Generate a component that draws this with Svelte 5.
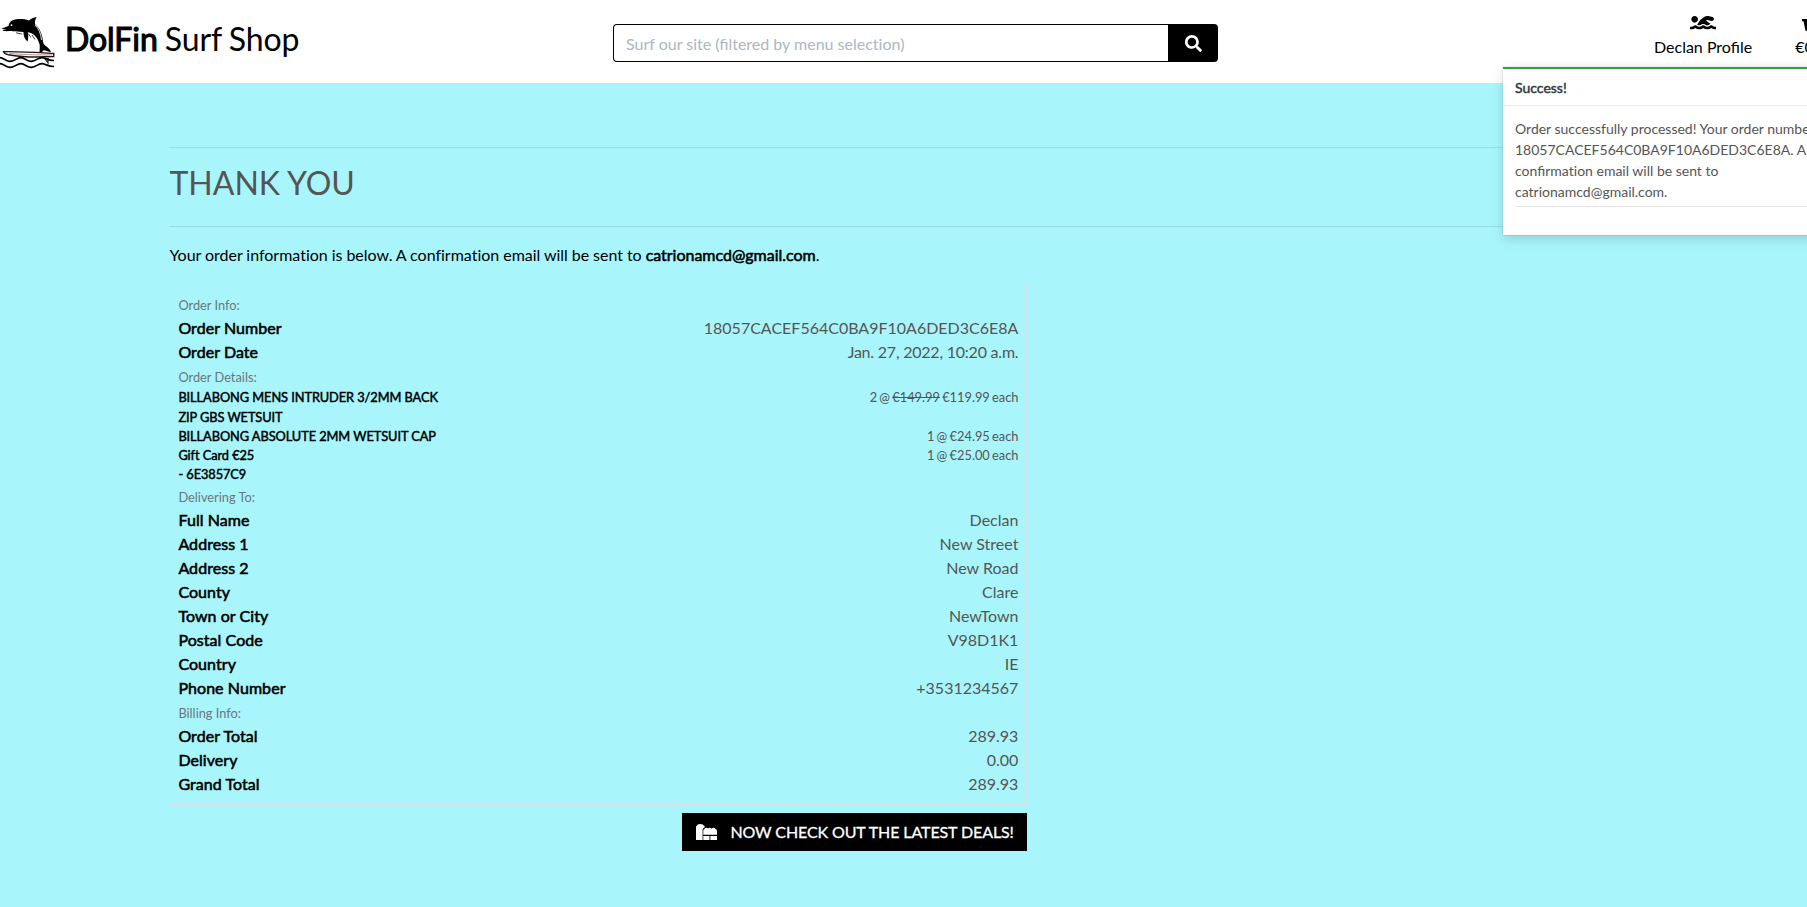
<script>
  const info = [
    ['Order Number', '18057CACEF564C0BA9F10A6DED3C6E8A'],
    ['Order Date', 'Jan. 27, 2022, 10:20 a.m.']
  ];
  const items = [
    { name: 'BILLABONG MENS INTRUDER 3/2MM BACK ZIP GBS WETSUIT', qty: 2, was: '€149.99', price: '€119.99' },
    { name: 'BILLABONG ABSOLUTE 2MM WETSUIT CAP', qty: 1, price: '€24.95' },
    { name: 'Gift Card €25', code: '- 6E3857C9', qty: 1, price: '€25.00' }
  ];
  const delivery = [
    ['Full Name', 'Declan'],
    ['Address 1', 'New Street'],
    ['Address 2', 'New Road'],
    ['County', 'Clare'],
    ['Town or City', 'NewTown'],
    ['Postal Code', 'V98D1K1'],
    ['Country', 'IE'],
    ['Phone Number', '+3531234567']
  ];
  const billing = [
    ['Order Total', '289.93'],
    ['Delivery', '0.00'],
    ['Grand Total', '289.93']
  ];
</script>

{#snippet rows(list)}
  {#each list as [label, value]}
    <div class="row"><span class="strong label">{label}</span><span class="value" class:date={label === 'Order Date'}>{value}</span></div>
  {/each}
{/snippet}

<div class="page">
  <header>
    <div class="brand">
      <svg class="logo" viewBox="0 0 55 53" width="55" height="53">
        <path d="M2.2 11.2 L4.5 10.4 L8.5 9 C9 5.5 12 2.5 16.5 2.3 C20 1.8 25 2 29 3.6 C31 1.5 33.5.5 36.7 0 C35 2.7 34.6 5 35.2 7.6 C39.5 11 42.3 17 43 24.5 C43.3 27 44.5 28 46.5 29.5 C48.7 31 50 32.5 51 35 C48 34.6 45.5 33.4 43.5 33.2 C42.4 34.6 41.5 35.8 39.4 36.8 C39.6 33 40 30 39.6 27.5 C38.5 23 36.5 20 33.5 17.5 C31.5 16 29.5 15.4 27.8 15.2 C28.6 18.5 28.2 21.8 27.6 24.6 C24.8 22.5 23.4 18.6 23.4 14.9 C19 14.5 16 14.6 13 14.2 C10 13.8 7 14.4 3.7 14 L2.4 13 L7 12 L2.2 12Z"/>
        <path d="M35 8 C39 12 41 17 41.5 23 M31.5 17.5 C34 19 36 21.4 36.8 24" fill="none" stroke="#fff" stroke-width=".9"/>
        <path d="M28.5 16.7 L30.8 20.5 M32 18 L35 22.5 M16 15.8 L22 17" fill="none" stroke="#111" stroke-width=".8"/>
        <circle cx="11.5" cy="8.1" r=".9" fill="#fff"/>
        <path d="M3.5 34.7 C18 34.3 36 35.5 53.7 36.5 L53.7 39.5 C35 40.6 19 39.6 8 37.7 C5.5 37 4 36 3.5 34.7Z" fill="#fff" stroke="#291012" stroke-width="1.4"/>
        <path d="M9 36.5 C23 37.7 37 38 52 38" fill="none" stroke="#573033" stroke-width=".5"/>
        <path d="M44 40.5 L48 46 L48 41" fill="none" stroke="#351719" stroke-width="1.2"/>
        <path d="M0 40.6 C4 40.8 6 44.5 10.500 44.400 C15 44.200 17 40.500 21 40.600 C25 40.800 27 44.500 31.500 44.400 C36 44.200 38 40.500 42 40.600 C46 40.800 48 43.800 54 43.500 M0 46.600 C4 46.800 6 50.500 10.500 50.400 C15 50.200 17 46.500 21 46.600 C25 46.800 27 50.500 31.500 50.400 C36 50.200 38 46.500 42 46.600 C46 46.800 48 49.800 54 49.500" fill="none" stroke="#000" stroke-width="1.700"/>
      </svg>
      <div class="title"><span class="strong">DolFin</span> Surf Shop</div>
    </div>
    <div class="search">
      <div class="field">Surf our site (filtered by menu selec<span class="split">ti</span>on)</div>
      <div class="go">
        <svg viewBox="0 0 512 512" width="17" height="17" fill="#fff"><path d="M505 442.700L405.300 343c-4.500-4.500-10.600-7-17-7H372c27.600-35.300 44-79.700 44-128C416 93.100 322.900 0 208 0S0 93.100 0 208s93.100 208 208 208c48.300 0 92.700-16.400 128-44v16.300c0 6.400 2.500 12.500 7 17l99.700 99.700c9.400 9.400 24.600 9.400 33.900 0l28.300-28.300c9.400-9.400 9.400-24.600.1-34zM208 336c-70.700 0-128-57.200-128-128 0-70.700 57.200-128 128-128 70.700 0 128 57.200 128 128 0 70.700-57.200 128-128 128z"/></svg>
      </div>
    </div>
    <div class="links">
      <div class="link">
        <svg viewBox="0 0 640 512" width="26.600" height="21.300"><path d="M189.610 310.580c3.540 3.260 15.270 9.420 34.390 9.420s30.860-6.160 34.390-9.420c16.020-14.770 34.500-22.580 53.460-22.580h16.300c18.960 0 37.450 7.810 53.460 22.580 3.540 3.260 15.270 9.420 34.390 9.420s30.860-6.160 34.390-9.420c14.860-13.710 31.880-21.120 49.390-22.160l-112.840-80.600 18-12.860c3.640-2.580 8.280-3.520 12.620-2.610l100.350 21.530c25.910 5.530 51.440-10.970 57-36.880 5.550-25.920-10.950-51.440-36.880-57L437.680 98.470c-30.730-6.580-63.020.12-88.560 18.380l-80.020 57.170c-10.380 7.390-19.360 16.440-26.720 26.940L173.750 299c5.470 3.230 10.820 6.930 15.860 11.580zM624 352h-16c-26.040 0-45.800-8.420-56.090-17.900-8.900-8.210-19.660-14.100-31.770-14.100h-16.300c-12.110 0-22.870 5.890-31.770 14.100C461.800 343.580 442.040 352 416 352s-45.800-8.420-56.090-17.900c-8.900-8.210-19.660-14.100-31.770-14.100h-16.300c-12.110 0-22.870 5.890-31.770 14.100C269.800 343.580 250.040 352 224 352s-45.800-8.420-56.090-17.900c-8.900-8.210-19.660-14.100-31.770-14.100h-16.300c-12.110 0-22.870 5.890-31.770 14.100C77.800 343.580 58.040 352 32 352H16c-8.840 0-16 7.160-16 16v32c0 8.840 7.160 16 16 16h16c38.620 0 72.720-12.190 96-31.840 23.280 19.660 57.380 31.840 96 31.840s72.720-12.190 96-31.840c23.280 19.660 57.380 31.840 96 31.840s72.720-12.190 96-31.840c23.280 19.660 57.380 31.840 96 31.840h16c8.840 0 16-7.160 16-16v-32c0-8.840-7.160-16-16-16zM112 256c44.180 0 80-35.820 80-80s-35.820-80-80-80-80 35.820-80 80 35.820 80 80 80z"/></svg>
        <span>Declan Profile</span>
      </div>
      <div class="link">
        <svg viewBox="0 0 27 21.300" width="27" height="21.300"><path d="M0 7H5L9 1H12L8 7H19L15 1H18L22 7H27V9.200H25.500L23.500 18.700H3.500L1.500 9.200H0Z"/></svg>
        <span>€0.00</span>
      </div>
    </div>
  </header>

  <main>
    <hr />
    <h2>THANK YOU</h2>
    <hr />
    <p class="intro">Your order informa<span class="split">ti</span>on is below. A confirma<span class="split">ti</span>on email will be sent to <span class="strong">catrionamcd@gmail.com</span>.</p>
    <section class="order">
      <div class="muted"><small>Order Info:</small></div>
      {@render rows(info)}
      <div class="muted"><small>Order Details:</small></div>
      {#each items as item}
        <div class="row item">
          <span class="strong name">{item.name}{#if item.code}<br />{item.code}{/if}</span>
          <span class="value">{item.qty} @ {#if item.was}<s>{item.was}</s>{' '}{/if}{item.price} each</span>
        </div>
      {/each}
      <div class="muted"><small>Delivering To:</small></div>
      {@render rows(delivery)}
      <div class="muted"><small>Billing Info:</small></div>
      {@render rows(billing)}
    </section>
    <div class="actions">
      <div class="deals">
        <svg viewBox="0 0 21 16" width="21" height="16" fill="#fff"><path d="M0 3Q0 1.600 1.200 1.400Q1.500.1 2.800.4Q4-.4 5.200.3Q6.800-.1 7.300 1.200Q8.900 1.400 8.800 3.200Q7 4 6.600 5.500V16H0Z"/><path d="M7.300 10.700V6.500Q7.300 5.200 8.600 5Q8.700 3.700 10.200 3.700Q11.600 3.700 12 4.700Q12.600 3.700 13.800 3.700Q15 3.700 15.600 4.700Q16.200 3.700 17.500 3.700Q19.100 3.700 19.300 5Q21 5.300 21 6.700V10.700ZM7.300 12H13.500V16H7.300ZM14.400 12H21V16H14.400Z"/></svg>
        <span>NOW CHECK OUT THE LATEST DEALS!</span>
      </div>
    </div>
  </main>

  <div class="toast">
    <div class="toast-head strong">Success!</div>
    <div class="toast-body">
      <div>Order successfully processed! Your order number is 18057CACEF564C0BA9F10A6DED3C6E8A. A confirma<span class="split">ti</span>on email will be sent to catrionamcd@gmail.com.</div>
      <hr />
    </div>
  </div>
</div>

<style>
  :global(body) { margin: 0; background: #a8f6fc; }
  .page {
    position: relative;
    width: 100%;
    height: 907px;
    overflow: hidden;
    background: #a8f6fc;
    font: 400 16px/24px Lato, sans-serif;
    color: #000;
    box-sizing: border-box;
  }
  .page :global(*) { box-sizing: border-box; }
  svg { display: block; flex: none; }
  .strong { -webkit-text-stroke: 0.035em currentColor; }
  .split { font-variant-ligatures: none; }

  header { display: flex; height: 83px; background: #fff; }
  .brand { display: flex; flex: none; width: 613px; padding-top: 17px; gap: 10px; }
  .title { font-size: 32px; line-height: 38px; padding-top: 3px; white-space: nowrap; word-spacing: -1px; letter-spacing: -0.080px; }
  .search { display: flex; flex: none; width: 605px; height: 38px; margin-top: 24px; }
  .field {
    flex: 1;
    border: 1px solid #000;
    border-right: 0;
    border-radius: 4px 0 0 4px;
    padding: 7px 12px 0;
    line-height: 24px;
    color: #aab7c4;
  }
  .go { width: 50px; background: #000; border-radius: 0 4px 4px 0; display: flex; align-items: center; justify-content: center; }
  .links { display: flex; flex: none; margin-left: 436px; padding-top: 12px; gap: 43px; white-space: nowrap; }
  .link { display: flex; flex: none; flex-direction: column; align-items: center; }
  .link span { margin-top: 2px; }

  main { margin-left: 169.400px; width: 1470px; padding-top: 64px; }
  hr { margin: 0; border: 0; border-top: 1px solid rgba(0, 0, 0, 0.1); }
  h2 { margin: 0; height: 78px; padding-top: 16px; font-size: 32px; line-height: 38.400px; font-weight: 400; color: #555; }
  .intro { margin: 16px 0; letter-spacing: -0.020px; word-spacing: -0.100px; font-variant-ligatures: common-ligatures; }
  .order { width: 858px; height: 522px; border: 1px solid #dee2e6; padding: 8.300px 8px 0; margin-top: 16px; }
  .row { display: flex; justify-content: space-between; }
  .label { letter-spacing: 0.060px; }
  .value { color: #555; }
  .date { letter-spacing: -0.220px; }
  .muted { height: 24px; color: #6c757d; }
  small { font-size: 12.800px; }
  .item { font-size: 12.800px; line-height: 19.200px; }
  .item .value { word-spacing: -1px; }
  .name { width: 270px; letter-spacing: -0.070px; }
  .actions { display: flex; justify-content: flex-end; width: 858px; margin-top: 8px; }
  .deals { display: flex; align-items: center; gap: 13px; width: 345px; height: 38px; padding-left: 14px; background: #000; color: #fff; white-space: nowrap; }
  .deals span { -webkit-text-stroke: 0.3px currentColor; letter-spacing: -0.100px; }

  .toast {
    position: absolute;
    top: 67px;
    left: 1503px;
    width: 350px;
    height: 168px;
    background: #fff;
    border-top: 2px solid #28a745;
    box-shadow: 0 4px 12px rgba(0, 0, 0, 0.15), 0 0 1px rgba(0, 0, 0, 0.3);
    font-size: 14px;
    line-height: 21px;
  }
  .toast-head { height: 37px; padding: 8px 12px 0; color: #343a40; border-bottom: 1px solid #e4eeee; }
  .toast-body { padding: 12px; color: #555; }
  .toast-body > div { width: 326px; }
  .toast-body hr { margin-top: 4px; }
</style>
